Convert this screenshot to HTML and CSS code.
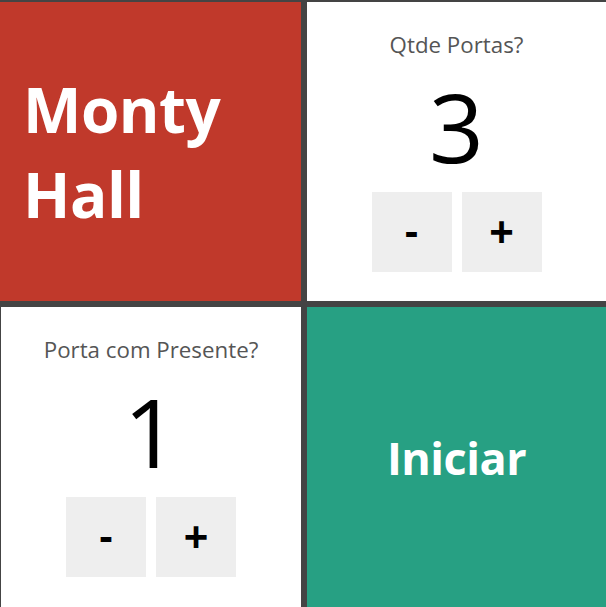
FILE: index.html
```html
<!DOCTYPE html>
<html lang="pt">
<head>
<meta charset="utf-8">
<title>Monty Hall</title>
<link rel="stylesheet" href="styles.css">
</head>
<body>
<main class="board">
  <section class="card card-title">
    <h1 class="title">Monty<br>Hall</h1>
  </section>
  <section class="card card-input">
    <p class="label">Qtde Portas?</p>
    <div class="value">3</div>
    <div class="controls">
      <button class="btn">-</button>
      <button class="btn">+</button>
    </div>
  </section>
  <section class="card card-input card-left">
    <p class="label">Porta com Presente?</p>
    <div class="value">1</div>
    <div class="controls">
      <button class="btn">-</button>
      <button class="btn">+</button>
    </div>
  </section>
  <section class="card card-start">
    <span class="start">Iniciar</span>
  </section>
</main>
</body>
</html>
```

FILE: styles.css
```css
html, body {
  margin: 0;
  padding: 0;
  background: #444444;
  width: 606px;
  height: 607px;
  overflow: hidden;
}

.board {
  display: grid;
  grid-template-columns: 301px 299px;
  grid-template-rows: 299px 300px;
  column-gap: 6px;
  row-gap: 6px;
  padding-top: 2px;
  font-family: "Open Sans", "Noto Sans", sans-serif;
}

.card {
  box-sizing: border-box;
}

.card-title {
  background: #c0392b;
  display: flex;
  align-items: center;
  padding-left: 23px;
}

.title {
  margin: 0;
  color: #ffffff;
  font-size: 62px;
  line-height: 85px;
  font-weight: 700;
  letter-spacing: -0.5px;
}

.card-input {
  background: #ffffff;
  display: flex;
  flex-direction: column;
  align-items: center;
  padding-top: 29px;
}

.card-left {
  margin-left: 1px;
}

.label {
  margin: 0;
  color: #555555;
  font-size: 22.3px;
  line-height: 28px;
}

.value {
  margin-top: 19px;
  color: #000000;
  font-size: 96px;
  line-height: 96px;
  font-weight: 400;
}

.controls {
  display: flex;
  gap: 10px;
  margin-top: 18px;
}

.btn {
  width: 80px;
  height: 80px;
  border: none;
  background: #eeeeee;
  color: #000000;
  font-family: "Liberation Sans", Arial, sans-serif;
  font-size: 42px;
  font-weight: 700;
  line-height: 1;
  padding: 0;
}

.card-start {
  background: #27a083;
  display: flex;
  align-items: center;
  justify-content: center;
}

.start {
  color: #ffffff;
  font-size: 45px;
  font-weight: 700;
  letter-spacing: -0.5px;
}
```
